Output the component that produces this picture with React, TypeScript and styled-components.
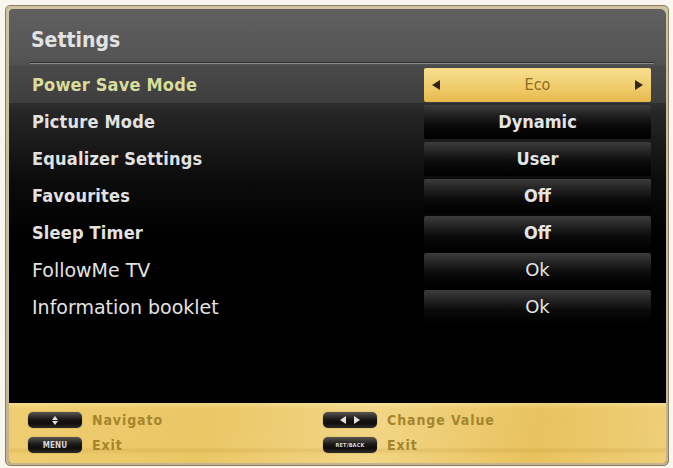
import React from 'react';
import styled, { createGlobalStyle } from 'styled-components';

type Setting = {
  label: string;
  value: string;
  bold?: boolean;
  selected?: boolean;
};

const settings: Setting[] = [
  { label: 'Power Save Mode', value: 'Eco', bold: true, selected: true },
  { label: 'Picture Mode', value: 'Dynamic', bold: true },
  { label: 'Equalizer Settings', value: 'User', bold: true },
  { label: 'Favourites', value: 'Off', bold: true },
  { label: 'Sleep Timer', value: 'Off', bold: true },
  { label: 'FollowMe TV', value: 'Ok' },
  { label: 'Information booklet', value: 'Ok' },
];

const GlobalStyle = createGlobalStyle`
  html, body {
    margin: 0;
    padding: 0;
    background: #f8f6ee;
  }
  body {
    font-family: "DejaVu Sans", sans-serif;
  }
`;

const Frame = styled.div`
  margin: 5px 0 0 5px;
  width: 657px;
  padding: 3px 2px 2px 3px;
  border: 1px solid #8d7e60;
  border-radius: 5px;
  background: linear-gradient(to bottom, #cfc3a4, #c3b48f);
`;

const Panel = styled.div`
  height: 454px;
  display: flex;
  flex-direction: column;
  border-radius: 4px 6px 2px 2px;
  overflow: hidden;
  background: linear-gradient(
    to bottom,
    #606060 0px,
    #545454 50px,
    #464646 66px,
    #262626 104px,
    #0c0c0c 170px,
    #000 230px
  );
`;

const Header = styled.div`
  height: 53px;
  box-sizing: border-box;
  padding: 8px 0 0 22px;
  display: flex;
  align-items: center;
  font-family: "DejaVu Sans Condensed", "DejaVu Sans", sans-serif;
  font-weight: bold;
  font-size: 21px;
  color: #e2e2e2;
`;

const Separator = styled.div`
  height: 1px;
  margin: 0 12px 0 21px;
  border-top: 1px solid #2e2e2e;
  background: #8c8c8c;
`;

const List = styled.div`
  margin-top: 2px;
  display: flex;
  flex-direction: column;
`;

const Row = styled.div<{ $selected?: boolean }>`
  height: 37px;
  padding: 0 15px 0 23px;
  display: flex;
  align-items: center;
  justify-content: space-between;
  background: ${(p) =>
    p.$selected ? 'linear-gradient(to bottom, #4a4a4a, #3e3e3e)' : 'transparent'};
`;

const Label = styled.span<{ $bold?: boolean; $selected?: boolean }>`
  font-family: ${(p) =>
    p.$bold ? '"DejaVu Sans Condensed", "DejaVu Sans", sans-serif' : '"DejaVu Sans", sans-serif'};
  font-weight: ${(p) => (p.$bold ? 'bold' : 'normal')};
  font-size: ${(p) => (p.$bold ? '18px' : '19px')};
  color: ${(p) => (p.$selected ? '#d9dc9c' : '#e2e2e2')};
  letter-spacing: ${(p) => (p.$bold ? '0.2px' : '0')};
`;

const ValueBox = styled.div<{ $selected?: boolean }>`
  width: 227px;
  height: 34px;
  box-sizing: border-box;
  padding: 0 8px;
  border-radius: 2px;
  display: flex;
  align-items: center;
  justify-content: space-between;
  background: ${(p) =>
    p.$selected
      ? 'linear-gradient(to bottom, #f7de8f 0%, #f0cd6c 55%, #e6b84c 100%)'
      : 'linear-gradient(to bottom, #3d3d3d 0%, #262626 25%, #0a0a0a 60%, #000 100%)'};
`;

const ValueText = styled.span<{ $bold?: boolean; $selected?: boolean }>`
  flex: 1;
  text-align: center;
  font-family: ${(p) =>
    p.$bold ? '"DejaVu Sans Condensed", "DejaVu Sans", sans-serif' : '"DejaVu Sans", sans-serif'};
  font-weight: ${(p) => (p.$bold && !p.$selected ? 'bold' : 'normal')};
  font-size: ${(p) => (p.$selected ? '16px' : '18px')};
  color: ${(p) => (p.$selected ? '#8c6c22' : '#e4e4e4')};
`;

const Arrow = styled.span<{ $dir: 'left' | 'right' }>`
  width: 0;
  height: 0;
  border-top: 5px solid transparent;
  border-bottom: 5px solid transparent;
  ${(p) =>
    p.$dir === 'left'
      ? 'border-right: 8px solid #2f2510;'
      : 'border-left: 8px solid #2f2510;'}
`;

const Spacer = styled.div`
  flex: 1;
`;

const Footer = styled.div`
  height: 60px;
  box-sizing: border-box;
  padding: 9px 0 0 19px;
  display: grid;
  grid-template-columns: 295px 1fr;
  grid-template-rows: 16px 16px;
  row-gap: 9px;
  background:
    linear-gradient(
      to bottom,
      rgba(255, 240, 190, 0.35) 0px,
      rgba(255, 240, 190, 0) 6px,
      rgba(180, 130, 30, 0) 44px,
      rgba(180, 130, 30, 0.18) 47px,
      rgba(180, 130, 30, 0) 52px
    ),
    linear-gradient(100deg, #efce72 0%, #eac765 30%, #f2d686 55%, #e8c25e 80%, #eecf78 100%);
`;

const Hint = styled.div`
  display: flex;
  align-items: center;
  gap: 10px;
`;

const Key = styled.div`
  width: 54px;
  height: 16px;
  border-radius: 5px;
  display: flex;
  align-items: center;
  justify-content: center;
  gap: 8px;
  background: linear-gradient(to bottom, #5a5550 0%, #1c1a18 45%, #0e0d0c 70%, #2e2b27 100%);
  box-shadow: 0 0 1px rgba(60, 40, 0, 0.6);
  font-family: "DejaVu Sans Condensed", "DejaVu Sans", sans-serif;
  font-weight: bold;
  color: #d8d8d8;
`;

const KeyText = styled.span<{ $size: number }>`
  font-size: ${(p) => p.$size}px;
  letter-spacing: 0.2px;
`;

const Stack = styled.div`
  display: flex;
  flex-direction: column;
  align-items: center;
  gap: 1px;
`;

const TinyArrow = styled.span<{ $dir: 'up' | 'down' | 'left' | 'right' }>`
  width: 0;
  height: 0;
  ${(p) => {
    switch (p.$dir) {
      case 'up':
        return 'border-left: 3px solid transparent; border-right: 3px solid transparent; border-bottom: 4px solid #e0e0e0;';
      case 'down':
        return 'border-left: 3px solid transparent; border-right: 3px solid transparent; border-top: 4px solid #e0e0e0;';
      case 'left':
        return 'border-top: 4px solid transparent; border-bottom: 4px solid transparent; border-right: 6px solid #e0e0e0;';
      default:
        return 'border-top: 4px solid transparent; border-bottom: 4px solid transparent; border-left: 6px solid #e0e0e0;';
    }
  }}
`;

const HintText = styled.span`
  font-family: "DejaVu Sans Condensed", "DejaVu Sans", sans-serif;
  font-weight: bold;
  font-size: 14px;
  letter-spacing: 0.9px;
  color: #a4852c;
`;

const App = () => {
  return (
    <>
      <GlobalStyle />
      <Frame>
        <Panel>
          <Header>Settings</Header>
          <Separator />
          <List>
            {settings.map((s) => (
              <Row key={s.label} $selected={s.selected}>
                <Label $bold={s.bold} $selected={s.selected}>
                  {s.label}
                </Label>
                <ValueBox $selected={s.selected}>
                  {s.selected && <Arrow $dir="left" />}
                  <ValueText $bold={s.bold} $selected={s.selected}>
                    {s.value}
                  </ValueText>
                  {s.selected && <Arrow $dir="right" />}
                </ValueBox>
              </Row>
            ))}
          </List>
          <Spacer />
          <Footer>
            <Hint>
              <Key>
                <Stack>
                  <TinyArrow $dir="up" />
                  <TinyArrow $dir="down" />
                </Stack>
              </Key>
              <HintText>Navigato</HintText>
            </Hint>
            <Hint>
              <Key>
                <TinyArrow $dir="left" />
                <TinyArrow $dir="right" />
              </Key>
              <HintText>Change Value</HintText>
            </Hint>
            <Hint>
              <Key>
                <KeyText $size={8}>MENU</KeyText>
              </Key>
              <HintText>Exit</HintText>
            </Hint>
            <Hint>
              <Key>
                <KeyText $size={5.5}>RET/BACK</KeyText>
              </Key>
              <HintText>Exit</HintText>
            </Hint>
          </Footer>
        </Panel>
      </Frame>
    </>
  );
};

export default App;
